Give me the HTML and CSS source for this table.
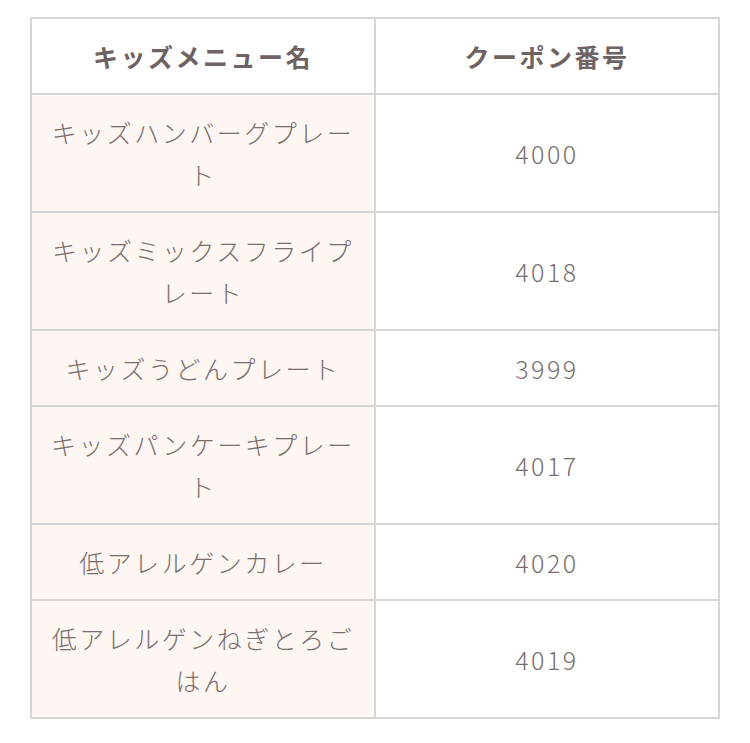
FILE: index.html
```html
<!DOCTYPE html>
<html lang="ja">
<head>
<meta charset="utf-8">
<link rel="stylesheet" href="styles.css">
</head>
<body>
<table class="coupon-table">
  <thead>
    <tr><th>キッズメニュー名</th><th>クーポン番号</th></tr>
  </thead>
  <tbody>
    <tr><td class="name">キッズハンバーグプレート</td><td>4000</td></tr>
    <tr><td class="name">キッズミックスフライプレート</td><td>4018</td></tr>
    <tr><td class="name">キッズうどんプレート</td><td>3999</td></tr>
    <tr><td class="name">キッズパンケーキプレート</td><td>4017</td></tr>
    <tr><td class="name">低アレルゲンカレー</td><td>4020</td></tr>
    <tr><td class="name">低アレルゲンねぎとろごはん</td><td>4019</td></tr>
  </tbody>
</table>
</body>
</html>
```
FILE: styles.css
```css
html, body {
  margin: 0;
  background: #ffffff;
}
body {
  padding: 17px 30px;
  font-family: "Noto Sans CJK JP", "Noto Sans", sans-serif;
  color: #7a6d6d;
}
.coupon-table {
  width: 690px;
  border-collapse: collapse;
  table-layout: fixed;
  border: 2px solid #d6d6d6;
}
.coupon-table th,
.coupon-table td {
  border: 2px solid #d6d6d6;
  padding: 16px 14px;
  text-align: center;
  vertical-align: middle;
  font-size: 25px;
  line-height: 42px;
  letter-spacing: 0.1em;
}
.coupon-table th {
  font-weight: 700;
  color: #6e6262;
  background: #ffffff;
}
.coupon-table td {
  font-weight: 300;
}
.coupon-table td.name {
  background: #fdf6f2;
}
```
